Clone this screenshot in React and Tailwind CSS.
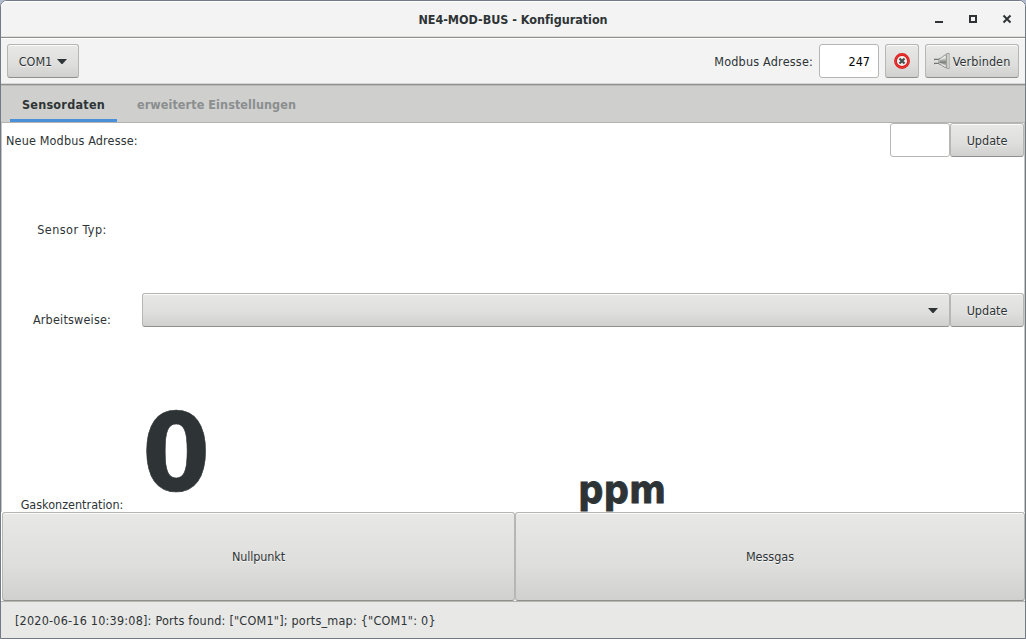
import React from "react";

const face =
  "rounded-[3px] border border-[#b6b6b3] border-b-[#8f908c] bg-[linear-gradient(to_bottom,#e8e8e7,#dededc_60%,#d0d0ce)] shadow-[inset_0_1px_0_#fbfbfa] [text-shadow:0_1px_0_rgba(255,255,255,0.75)]";

function Button({ className = "", children }) {
  return (
    <button className={`${face} flex shrink-0 items-center justify-center ${className}`}>
      {children}
    </button>
  );
}

function Arrow() {
  return (
    <svg width="10" height="6" viewBox="0 0 10 6" className="shrink-0">
      <path d="M0 1h10L5.500 6h-1z" fill="#2e3436" />
    </svg>
  );
}

function StopIcon() {
  return (
    <svg width="16" height="16" viewBox="0 0 16 16">
      <circle cx="8" cy="8" r="6.5" fill="#f4f3f2" stroke="#dc1d1d" strokeWidth="2.8" />
      <circle cx="8" cy="8" r="6.5" fill="none" stroke="#ef4a45" strokeWidth="0.7" />
      <path d="M5.500 5.500l5 5M10.500 5.500l-5 5" stroke="#4d5050" strokeWidth="2.3" />
    </svg>
  );
}

function PlugIcon() {
  return (
    <svg width="16" height="16" viewBox="0 0 16 16" className="shrink-0">
      <defs>
        <linearGradient id="plug" x1="0" x2="0" y1="0" y2="1">
          <stop offset="0" stopColor="#e4e5e2" />
          <stop offset="0.3" stopColor="#b4b6b1" />
          <stop offset="0.6" stopColor="#7c7e79" />
          <stop offset="1" stopColor="#c4c6c1" />
        </linearGradient>
      </defs>
      <path d="M0 6.500h5M0 10.500h5" stroke="#747671" strokeWidth="1.4" />
      <path d="M1 7.600h4M1 11.600h4" stroke="#f4f4f2" strokeWidth="0.700" />
      <path
        d="M12.300 1.500C9 2.500 8.500 5 5 5.800v5.400c3.500.600 4 3 7.300 3.500z"
        fill="#e9e9e7"
        stroke="#858782"
        strokeWidth="0.900"
      />
      <path d="M12 4.500C9.500 4.800 8.500 6.500 5.500 7v3c3 .500 4 2 6.500 2.500z" fill="url(#plug)" />
      <rect x="12.900" y="0.500" width="2.200" height="15" fill="#e4e5e0" stroke="#92948f" strokeWidth="0.800" />
    </svg>
  );
}

function WindowControls() {
  return (
    <svg width="78" height="12" viewBox="0 0 78 12" className="ml-auto mr-[12px]">
      <path d="M0 8h8v2H0z" fill="#2e3436" />
      <path d="M35 3h6v6h-6z" fill="none" stroke="#2e3436" strokeWidth="2" />
      <path d="M68.500 2.500l7 7M75.500 2.500l-7 7" stroke="#2e3436" strokeWidth="2" />
    </svg>
  );
}

export default function App() {
  return (
    <div className="h-[639px] w-[1026px] overflow-hidden bg-[#b0bacb] font-['DejaVu_Sans_Condensed','DejaVu_Sans',sans-serif] text-[12.5px] leading-4 text-[#2e3436] [font-stretch:condensed] whitespace-nowrap">
      <div className="flex h-full flex-col rounded-t-[7px] border border-[#737987] bg-white">
        <header className="grid h-[37px] shrink-0 grid-cols-[1fr_auto_1fr] items-center rounded-t-[6px] border-b border-[#8f908c] bg-[#f3f3f3] shadow-[inset_0_1px_0_#fff,inset_0_-1px_0_#dededc]">
          <span />
          <h1 className="pt-px font-bold tracking-[-0.03px]">NE4-MOD-BUS - Konfiguration</h1>
          <WindowControls />
        </header>

        <div className="flex h-[47px] shrink-0 items-center border-b border-[#8f908c] bg-[#f3f3f3] pl-[6px] pr-[6px] shadow-[inset_0_1px_0_#fff,inset_0_-1px_0_#d8d8d6]">
          <Button className="h-[34px] w-[72px] gap-[5px]">
            <span className="pt-[2px]">COM1</span>
            <Arrow />
          </Button>
          <span className="ml-auto mr-[6px] pt-[2px] tracking-[0.2px]">Modbus Adresse:</span>
          <div className="mr-[6px] flex h-[34px] w-[60px] items-center justify-end rounded-[3px] border border-[#b6b6b3] bg-white pr-[8px] pt-[2px] text-black">
            247
          </div>
          <Button className="mr-[6px] h-[34px] w-[34px]">
            <StopIcon />
          </Button>
          <Button className="h-[34px] w-[94px] gap-[3px]">
            <PlugIcon />
            <span className="pt-[2px] tracking-[0.1px]">Verbinden</span>
          </Button>
        </div>

        <nav className="flex h-[38px] shrink-0 border-b border-[#b3b3af] bg-[#cfcfcd] pl-[9px] font-bold shadow-[inset_0_1px_0_#b9b9b6]">
          <div className="flex w-[107px] items-center justify-center border-b-[3px] border-[#4a90d9] pt-[5px] tracking-[0.25px]">
            Sensordaten
          </div>
          <div className="flex w-[199px] items-center justify-center pt-[2px] tracking-[0.08px] text-[#8b8e8f]">
            erweiterte Einstellungen
          </div>
        </nav>

        <main className="flex h-[389px] shrink-0 flex-col border-x border-[#c4c4c1] bg-white">
          <div className="flex h-[34px] items-center pl-[4px]">
            <span className="pt-[2px] tracking-[0.15px]">Neue Modbus Adresse:</span>
            <div className="ml-auto h-[34px] w-[60px] rounded-[3px] border border-[#b6b6b3] bg-white" />
            <Button className="h-[34px] w-[74px] pt-px">Update</Button>
          </div>
          <div className="flex h-[136px] items-center pt-[9px]">
            <span className="w-[140px] text-center tracking-[0.45px]">Sensor Typ:</span>
          </div>
          <div className="flex h-[34px]">
            <span className="w-[140px] pt-[19px] text-center tracking-[0.2px]">Arbeitsweise:</span>
            <div className={`${face} flex flex-1 items-center justify-end pr-[11px]`}>
              <Arrow />
            </div>
            <Button className="h-[34px] w-[74px] pt-px">Update</Button>
          </div>
          <div className="flex flex-1 items-end">
            <span className="w-[140px] translate-y-px text-center">Gaskonzentration:</span>
            <span className="w-[436px] text-[109px] font-bold leading-[118px] [-webkit-text-stroke:0.6px_#2e3436]">
              0
            </span>
            <span className="text-[39.5px] font-bold leading-[45px] [-webkit-text-stroke:0.8px_#2e3436]">
              ppm
            </span>
          </div>
        </main>

        <div className="flex h-[89px] shrink-0 pl-[1px]">
          <Button className="h-[89px] w-[513px] tracking-[-0.12px]">Nullpunkt</Button>
          <Button className="h-[89px] w-[510px]">Messgas</Button>
        </div>

        <footer className="flex flex-1 items-center border-t border-[#b6b6b3] bg-[#e8e8e7] pl-[14px] pt-[2px] tracking-[0.21px]">
          [2020-06-16 10:39:08]: Ports found: ["COM1"]; ports_map: {'{"COM1": 0}'}
        </footer>
      </div>
    </div>
  );
}
